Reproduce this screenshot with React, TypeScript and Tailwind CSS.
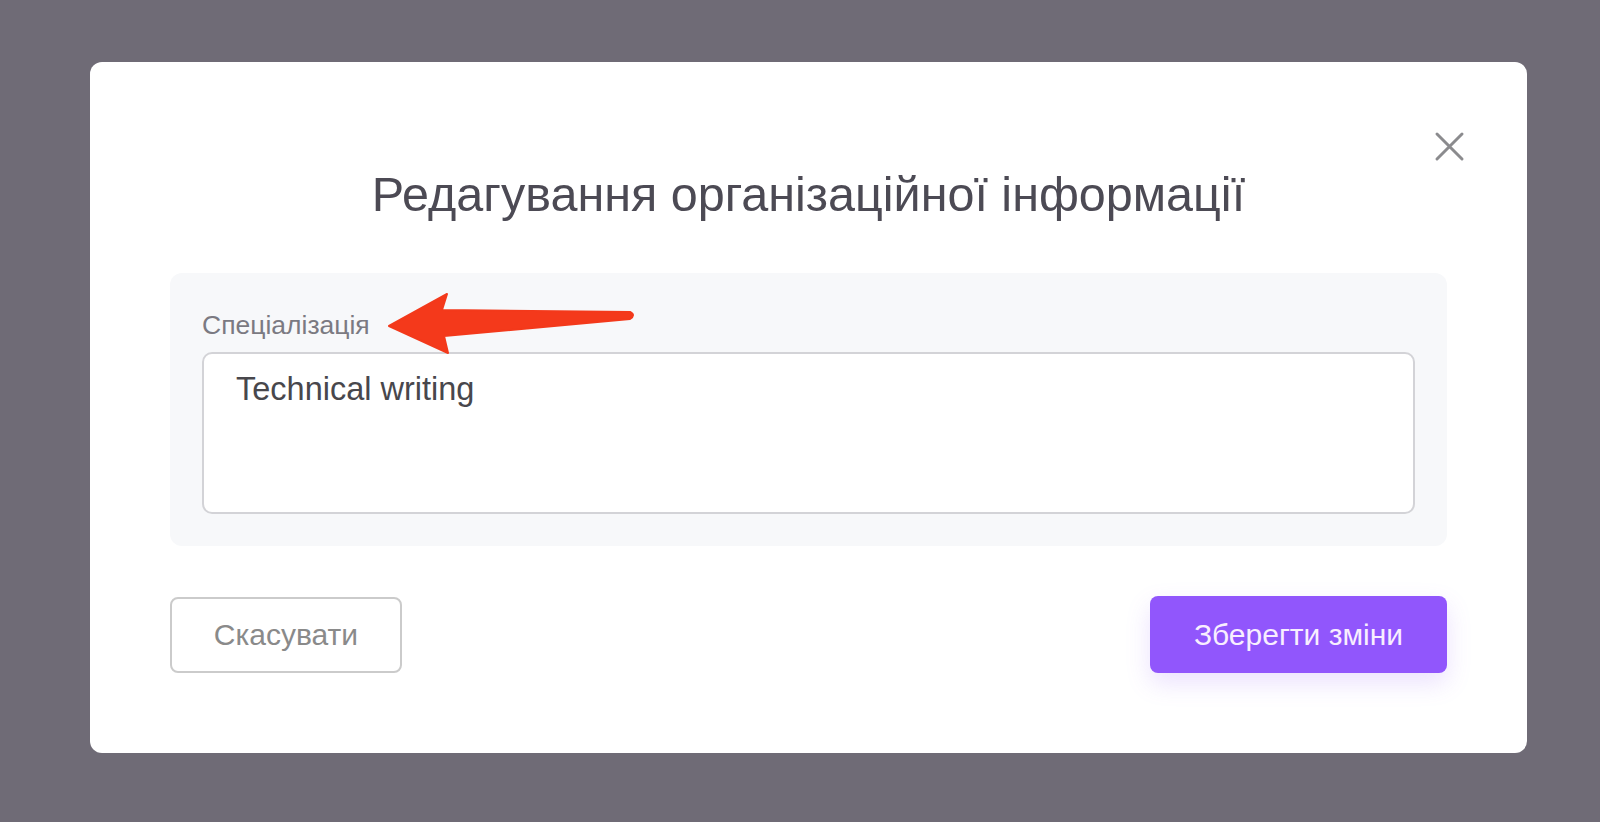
export default function App() {
  return (
    <div className="min-h-screen w-full bg-[#6f6b76] pl-[90px] pt-[62px] pb-[69px] font-['Liberation_Sans',Arial,sans-serif]">
      <div className="relative w-[1437px] rounded-[12px] bg-white px-[80px] pb-[80px] pt-[104px]">
        <button
          type="button"
          aria-label="Close"
          className="absolute right-[62px] top-[69px] flex h-[31px] w-[31px] items-center justify-center"
        >
          <svg width="31" height="31" viewBox="0 0 31 31" fill="none">
            <path d="M3 3 L28 28 M28 3 L3 28" stroke="#8b8b8e" strokeWidth="3" strokeLinecap="round" />
          </svg>
        </button>

        <h2 className="text-center text-[48.5px] font-normal leading-[56px] text-[#4c4a54]">
          Редагування організаційної інформації
        </h2>

        <div className="relative mt-[51px] rounded-[12px] bg-[#f7f8fa] px-[32px] pb-[32px] pt-[37px]">
          <label className="block text-[26.5px] leading-[30px] text-[#7b7a82]">Спеціалізація</label>
          <textarea
            defaultValue="Technical writing"
            className="mt-[12px] block h-[162px] w-full resize-none rounded-[10px] border-2 border-[#d3d3d7] bg-white px-[32px] pt-[15px] text-[32.5px] leading-[40px] text-[#48474c] outline-none"
          />

          <svg
            className="pointer-events-none absolute left-[210px] top-[16px]"
            width="262"
            height="70"
            viewBox="0 0 262 70"
          >
            <path
              d="M9 37 L67 5 L62 21 L250 23 Q256 26 250 30 L64 47 L68 64 Z"
              fill="#f4391b"
              stroke="#f3391b"
              strokeWidth="2"
              strokeLinejoin="round"
            />
          </svg>
        </div>

        <div className="mt-[50px] flex items-center justify-between">
          <button
            type="button"
            className="h-[76px] w-[232px] rounded-[8px] border-2 border-[#cbcbcb] bg-white text-[30px] text-[#8a8a8a]"
          >
            Скасувати
          </button>
          <button
            type="button"
            className="h-[77px] w-[297px] rounded-[8px] bg-[#9156fc] text-[30px] text-[#f8eeff] shadow-[0_10px_24px_rgba(145,86,252,0.18)]"
          >
            Зберегти зміни
          </button>
        </div>
      </div>
    </div>
  );
}
